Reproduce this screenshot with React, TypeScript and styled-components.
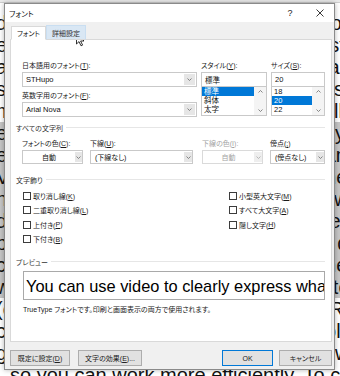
import React from 'react';
import styled, { createGlobalStyle } from 'styled-components';

const GlobalStyle = createGlobalStyle`
  html, body {
    margin: 0;
    padding: 0;
  }
  body {
    width: 340px;
    height: 376px;
    overflow: hidden;
    background: #fff;
    font-family: "Liberation Sans", "Noto Sans CJK JP", sans-serif;
  }
`;

const Desktop = styled.div`
  position: relative;
  width: 340px;
  height: 376px;
  overflow: hidden;
  background: #fff;
`;

// the Word document that sits behind the dialog
const Ribbon = styled.div`
  height: 3px;
  background: #e9e9e9;
  border-bottom: 1px solid #cfcfcf;
  box-sizing: border-box;
`;

const DocPage = styled.div`
  padding-top: 9px;
  margin-left: -4px;
  font-family: "Liberation Sans", Arial, sans-serif;
  font-size: 20px;
  line-height: 22px;
  color: #111;
  white-space: nowrap;
`;

const DocLine = styled.div<{ $selected?: boolean; $indent?: number }>`
  padding-left: ${(p) => p.$indent ?? 0}px;
  background: ${(p) => (p.$selected ? '#c6c6c6' : 'transparent')};
`;

// dialog window
const Window = styled.div`
  position: absolute;
  left: 4px;
  top: 3px;
  width: 331px;
  height: 367px;
  box-sizing: border-box;
  border: 1px solid #8a8a8a;
  background: #f0f0f0;
  box-shadow: 0 0 5px rgba(0, 0, 0, 0.3);
  display: flex;
  flex-direction: column;
  font-family: "Liberation Sans", "Noto Sans CJK JP", sans-serif;
  font-feature-settings: "palt";
  font-size: 7px;
  color: #1a1a1a;
`;

const TitleBar = styled.div`
  height: 18px;
  background: #fff;
  display: flex;
  align-items: center;
  padding-left: 4px;
`;

const Title = styled.span`
  flex: 1;
  font-size: 7.5px;
  color: #111;
`;

const TitleButton = styled.div`
  width: 28px;
  height: 18px;
  display: flex;
  align-items: center;
  justify-content: center;
  font-size: 9px;
  color: #222;
  & + & {
    margin-left: 2px;
  }
`;

const Body = styled.div`
  flex: 1;
  display: flex;
  flex-direction: column;
  padding: 4px 2px 0 5px;
`;

const TabRow = styled.div`
  display: flex;
  align-items: flex-end;
  height: 14px;
  margin-left: 1px;
  position: relative;
  z-index: 1;
  margin-bottom: -1px;
`;

const Tab = styled.div<{ $active?: boolean; $hover?: boolean }>`
  box-sizing: border-box;
  height: ${(p) => (p.$hover ? 15 : 14)}px;
  padding: 0 5px;
  display: flex;
  align-items: center;
  font-size: 7px;
  background: ${(p) => (p.$active ? '#fff' : p.$hover ? '#d9e7f4' : '#f0f0f0')};
  border: 1px solid ${(p) => (p.$active ? '#d9d9d9' : p.$hover ? '#c9def1' : '#d9d9d9')};
  border-bottom: ${(p) => (p.$active ? '1px solid #fff' : '1px solid #d9d9d9')};
  color: ${(p) => (p.$active ? '#111' : '#333')};
`;

const Panel = styled.div`
  height: 303px;
  box-sizing: border-box;
  background: #fff;
  border: 1px solid #d9d9d9;
  padding: 20px 6px 0 5px;
`;

const FontGrid = styled.div`
  margin-left: 6px;
  display: grid;
  grid-template-columns: 175px 66px 1fr;
  column-gap: 4px;
`;

const Column = styled.div`
  display: flex;
  flex-direction: column;
`;

const Label = styled.div<{ $gap?: number; $disabled?: boolean }>`
  height: 11px;
  line-height: 11px;
  margin-top: ${(p) => p.$gap ?? 0}px;
  margin-bottom: 1px;
  white-space: nowrap;
  color: ${(p) => (p.$disabled ? '#a3a3a3' : '#1a1a1a')};
`;

const Key = styled.span`
  text-decoration: underline;
`;

const TextBox = styled.div`
  height: 15px;
  box-sizing: border-box;
  border: 1px solid #c9c9c9;
  background: #fff;
  display: flex;
  align-items: center;
  padding-left: 3px;
  font-size: 7.5px;
  color: #111;
`;

const ComboBox = styled(TextBox)`
  padding: 0 1px 0 3px;
`;

const ComboText = styled.span`
  flex: 1;
`;

const ArrowButton = styled.div<{ $width?: number; $disabled?: boolean }>`
  width: ${(p) => p.$width ?? 11}px;
  align-self: stretch;
  margin: 1px 0;
  display: flex;
  align-items: center;
  justify-content: center;
  background: ${(p) => (p.$disabled ? '#eeeeee' : '#e6e6e6')};
`;

const ListBox = styled.div`
  height: 30px;
  margin-top: -1px;
  box-sizing: border-box;
  border: 1px solid #c9c9c9;
  background: #fff;
  display: flex;
`;

const ListItems = styled.div`
  flex: 1;
  padding-top: 0;
`;

const ListItem = styled.div<{ $selected?: boolean }>`
  height: 9px;
  line-height: 9px;
  padding-left: 2px;
  font-size: 7.5px;
  background: ${(p) => (p.$selected ? '#0078d7' : 'transparent')};
  color: ${(p) => (p.$selected ? '#fff' : '#111')};
`;

const ScrollBar = styled.div`
  width: 12px;
  background: #f4f4f4;
  display: flex;
  flex-direction: column;
  justify-content: space-between;
  align-items: center;
  padding: 3px 0;
`;

const SectionTitle = styled.div<{ $gap: number }>`
  height: 11px;
  margin-top: ${(p) => p.$gap}px;
  display: flex;
  align-items: center;
  white-space: nowrap;
  color: #333;
  &::after {
    content: '';
    flex: 1;
    height: 1px;
    margin-left: 3px;
    background: #e6e6e6;
  }
`;

const EffectsRow = styled.div`
  margin: 5px 0 0 6px;
  display: grid;
  grid-template-columns: 68px 112px 68px 1fr;
`;

const Dropdown = styled.div<{ $width: number; $disabled?: boolean }>`
  width: ${(p) => p.$width}px;
  height: 14px;
  box-sizing: border-box;
  border: 1px solid ${(p) => (p.$disabled ? '#dadada' : '#c9c9c9')};
  background: #fff;
  display: flex;
  align-items: center;
  color: ${(p) => (p.$disabled ? '#a3a3a3' : '#111')};
`;

const DropdownValue = styled.span<{ $center?: boolean }>`
  flex: 1;
  text-align: ${(p) => (p.$center ? 'center' : 'left')};
  padding-left: ${(p) => (p.$center ? 0 : 4)}px;
  white-space: nowrap;
`;

const CheckGrid = styled.div`
  margin: 4px 0 0 7px;
  display: grid;
  grid-auto-flow: column;
  grid-template-rows: repeat(4, 14.33px);
  grid-template-columns: 206px 1fr;
`;

const CheckItem = styled.div`
  display: flex;
  align-items: center;
  white-space: nowrap;
`;

const CheckBox = styled.span`
  width: 8px;
  height: 8px;
  box-sizing: border-box;
  border: 1px solid #3c3c3c;
  background: #fff;
  margin-right: 2px;
`;

const PreviewBox = styled.div`
  margin: 4px 0 0 7px;
  height: 29px;
  box-sizing: border-box;
  border: 1px solid #a9a9a9;
  overflow: hidden;
  white-space: nowrap;
  display: flex;
  align-items: center;
  padding: 1px 0 0 2px;
  font-family: "Liberation Sans", Arial, sans-serif;
  font-size: 16.4px;
  color: #000;
`;

const Note = styled.div`
  margin: 4px 0 0 7px;
  height: 11px;
  line-height: 11px;
  white-space: nowrap;
  color: #222;
`;

const ButtonRow = styled.div`
  margin-top: 8px;
  display: flex;
  align-items: center;
`;

const Spacer = styled.div`
  flex: 1;
`;

const Button = styled.div<{ $width: number; $gap?: number; $default?: boolean }>`
  width: ${(p) => p.$width}px;
  height: 16px;
  margin-left: ${(p) => p.$gap ?? 0}px;
  box-sizing: border-box;
  border: 1px solid ${(p) => (p.$default ? '#0078d7' : '#adadad')};
  background: #e1e1e1;
  display: flex;
  align-items: center;
  justify-content: center;
  white-space: nowrap;
  color: #222;
`;

const Pointer = styled.svg`
  position: absolute;
  left: 76px;
  top: 33px;
`;

const Chevron = ({ up, color = '#6b6b6b' }: { up?: boolean; color?: string }) => (
  <svg width="5" height="3" viewBox="0 0 5 3">
    <path
      d={up ? 'M0.5 2.5 L2.5 0.5 L4.5 2.5' : 'M0.5 0.5 L2.5 2.5 L4.5 0.5'}
      stroke={color}
      strokeWidth="0.8"
      fill="none"
    />
  </svg>
);

const docLines: { text: string; selected?: boolean; indent?: number }[] = [
  { text: 'deo provides a powerful way to help you prove your point.' },
  { text: 'en you click Online Video, you can paste in the embed code' },
  { text: 'a the video you want to add. You can also type a keyword' },
  { text: 'search online for the video that best fits your document.' },
  { text: 'make your document look professionally produced, Word' },
  { text: 'ep your document coordinated. When you click Design and (', selected: true },
  { text: 'e a new Theme, the pictures, charts, and SmartArt graphics', selected: true },
  { text: 'Vhange to match your new theme. When you apply styles, you', selected: true },
  { text: 'new headings change to match the new theme. Save time in', selected: true },
  { text: 'd with new buttons that show up where you need them. To g', selected: true },
  { text: 'p change the way a picture fits in your document, click it s', selected: true },
  { text: 'c a button for layout options appears next to it. When you s', selected: true },
  { text: ' work on a table, click where you want to add a row or a i', selected: true },
  { text: '(column, and then click the plus sign. Reading is easier, to', selected: false },
  { text: 'c in the new Reading view. You can collapse parts of the' },
  { text: 'g document and focus on the text you want, much easier to m' },
  { text: 'so you can work more efficiently. To continue reading', indent: 14 },
];

export default function App() {
  return (
    <>
      <GlobalStyle />
      <Desktop>
        <Ribbon />
        <DocPage>
          {docLines.map((l, i) => (
            <DocLine key={i} $selected={l.selected} $indent={l.indent}>
              {l.text}
            </DocLine>
          ))}
        </DocPage>

        <Window>
          <TitleBar>
            <Title>フォント</Title>
            <TitleButton>?</TitleButton>
            <TitleButton>
              <svg width="8" height="8" viewBox="0 0 8 8">
                <path d="M0.5 0.5 L7.5 7.5 M7.5 0.5 L0.5 7.5" stroke="#222" strokeWidth="0.9" />
              </svg>
            </TitleButton>
          </TitleBar>

          <Body>
            <TabRow>
              <Tab $active>フォント</Tab>
              <Tab $hover>詳細設定</Tab>
            </TabRow>

            <Panel>
              <FontGrid>
                <Column>
                  <Label>
                    日本語用のフォント(<Key>T</Key>):
                  </Label>
                  <ComboBox>
                    <ComboText>STHupo</ComboText>
                    <ArrowButton>
                      <Chevron />
                    </ArrowButton>
                  </ComboBox>
                  <Label $gap={3}>
                    英数字用のフォント(<Key>F</Key>):
                  </Label>
                  <ComboBox>
                    <ComboText>Arial Nova</ComboText>
                    <ArrowButton>
                      <Chevron />
                    </ArrowButton>
                  </ComboBox>
                </Column>

                <Column>
                  <Label>
                    スタイル(<Key>Y</Key>):
                  </Label>
                  <TextBox>標準</TextBox>
                  <ListBox>
                    <ListItems>
                      <ListItem $selected>標準</ListItem>
                      <ListItem>斜体</ListItem>
                      <ListItem>太字</ListItem>
                    </ListItems>
                    <ScrollBar>
                      <Chevron up />
                      <Chevron />
                    </ScrollBar>
                  </ListBox>
                </Column>

                <Column>
                  <Label>
                    サイズ(<Key>S</Key>):
                  </Label>
                  <TextBox>20</TextBox>
                  <ListBox>
                    <ListItems>
                      <ListItem>18</ListItem>
                      <ListItem $selected>20</ListItem>
                      <ListItem>22</ListItem>
                    </ListItems>
                    <ScrollBar>
                      <Chevron up />
                      <Chevron />
                    </ScrollBar>
                  </ListBox>
                </Column>
              </FontGrid>

              <SectionTitle $gap={5}>すべての文字列</SectionTitle>
              <EffectsRow>
                <Column>
                  <Label>
                    フォントの色(<Key>C</Key>):
                  </Label>
                  <Dropdown $width={61}>
                    <DropdownValue $center>自動</DropdownValue>
                    <ArrowButton $width={7}>
                      <Chevron />
                    </ArrowButton>
                  </Dropdown>
                </Column>
                <Column>
                  <Label>
                    下線(<Key>U</Key>):
                  </Label>
                  <Dropdown $width={103}>
                    <DropdownValue>(下線なし)</DropdownValue>
                    <ArrowButton $width={8}>
                      <Chevron />
                    </ArrowButton>
                  </Dropdown>
                </Column>
                <Column>
                  <Label $disabled>
                    下線の色(<Key>I</Key>):
                  </Label>
                  <Dropdown $width={61} $disabled>
                    <DropdownValue $center>自動</DropdownValue>
                    <ArrowButton $width={8} $disabled>
                      <Chevron color="#a8a8a8" />
                    </ArrowButton>
                  </Dropdown>
                </Column>
                <Column>
                  <Label>
                    傍点(<Key>;</Key>)
                  </Label>
                  <Dropdown $width={55}>
                    <DropdownValue>(傍点なし)</DropdownValue>
                    <ArrowButton $width={8}>
                      <Chevron />
                    </ArrowButton>
                  </Dropdown>
                </Column>
              </EffectsRow>

              <SectionTitle $gap={10}>文字飾り</SectionTitle>
              <CheckGrid>
                <CheckItem>
                  <CheckBox />
                  取り消し線(<Key>K</Key>)
                </CheckItem>
                <CheckItem>
                  <CheckBox />
                  二重取り消し線(<Key>L</Key>)
                </CheckItem>
                <CheckItem>
                  <CheckBox />
                  上付き(<Key>P</Key>)
                </CheckItem>
                <CheckItem>
                  <CheckBox />
                  下付き(<Key>B</Key>)
                </CheckItem>
                <CheckItem>
                  <CheckBox />
                  小型英大文字(<Key>M</Key>)
                </CheckItem>
                <CheckItem>
                  <CheckBox />
                  すべて大文字(<Key>A</Key>)
                </CheckItem>
                <CheckItem>
                  <CheckBox />
                  隠し文字(<Key>H</Key>)
                </CheckItem>
              </CheckGrid>

              <SectionTitle $gap={10}>プレビュー</SectionTitle>
              <PreviewBox>You can use video to clearly express what you want to say</PreviewBox>
              <Note>TrueType フォントです。印刷と画面表示の両方で使用されます。</Note>
            </Panel>

            <ButtonRow>
              <Button $width={60}>
                既定に設定(<Key>D</Key>)
              </Button>
              <Button $width={64} $gap={8}>
                文字の効果(<Key>E</Key>)...
              </Button>
              <Spacer />
              <Button $width={51} $default>
                OK
              </Button>
              <Button $width={53} $gap={6}>
                キャンセル
              </Button>
            </ButtonRow>
          </Body>
        </Window>

        <Pointer width="9" height="14" viewBox="0 0 9 14">
          <path
            d="M0.5 0.5 L0.5 11 L3 8.6 L5 12.8 L6.6 12.1 L4.6 8 L8 8 Z"
            fill="#fff"
            stroke="#000"
            strokeWidth="0.8"
          />
        </Pointer>
      </Desktop>
    </>
  );
}
